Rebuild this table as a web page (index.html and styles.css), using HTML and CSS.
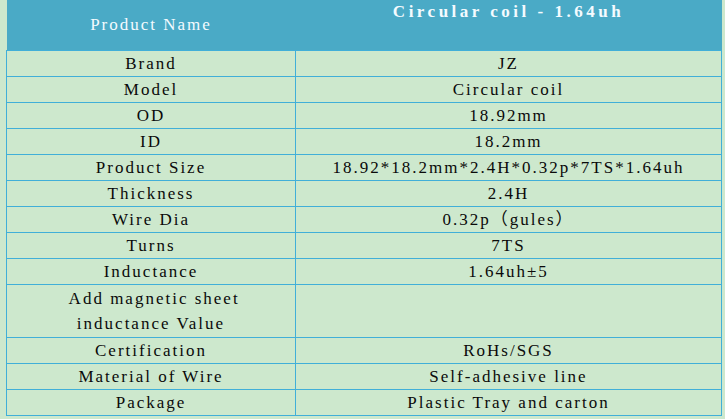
FILE: index.html
```html
<!DOCTYPE html>
<html>
<head>
<meta charset="utf-8">
<link rel="stylesheet" href="styles.css">
</head>
<body>
<table class="spec">
  <colgroup><col class="c1"><col class="c2"></colgroup>
  <thead>
    <tr class="head">
      <th class="h-name">Product Name</th>
      <th class="h-title">Circular coil - 1.64uh</th>
    </tr>
  </thead>
  <tbody>
    <tr><td>Brand</td><td>JZ</td></tr>
    <tr><td>Model</td><td>Circular coil</td></tr>
    <tr><td>OD</td><td>18.92mm</td></tr>
    <tr><td>ID</td><td>18.2mm</td></tr>
    <tr><td>Product Size</td><td>18.92*18.2mm*2.4H*0.32p*7TS*1.64uh</td></tr>
    <tr><td>Thickness</td><td>2.4H</td></tr>
    <tr><td>Wire Dia</td><td>0.32p（gules）</td></tr>
    <tr><td>Turns</td><td>7TS</td></tr>
    <tr><td>Inductance</td><td>1.64uh±5</td></tr>
    <tr class="tall"><td>&nbsp;Add magnetic sheet<br>inductance Value</td><td></td></tr>
    <tr><td>Certification</td><td>RoHs/SGS</td></tr>
    <tr><td>Material of Wire</td><td>Self-adhesive line</td></tr>
    <tr><td>Package</td><td>Plastic Tray and carton</td></tr>
  </tbody>
</table>
</body>
</html>
```
FILE: styles.css
```css
html, body {
  margin: 0;
  padding: 0;
  background: #cde8cd;
}
body {
  padding-left: 6px;
  font-family: "Liberation Serif", "Noto Sans CJK SC", serif;
  font-size: 17px;
  letter-spacing: 2px;
  color: #0a0a0a;
}
.spec {
  border-collapse: collapse;
  table-layout: fixed;
  width: 715px;
}
.c1 { width: 289px; }
.c2 { width: 426px; }
.spec td {
  border: 1px solid #41afd8;
  text-align: center;
  vertical-align: middle;
  height: 25px;
  padding: 0;
  line-height: 25px;
  white-space: nowrap;
}
.spec .tall td {
  height: 51px;
  line-height: 25px;
  padding: 0 0 1px;
}
.head th {
  background: #4aaac6;
  color: #f4fbff;
  height: 50px;
  padding: 0;
  border: 0;
  font-weight: normal;
}
.h-name {
  vertical-align: middle;
  padding-top: 0;
}
.h-title {
  vertical-align: top;
  font-weight: bold !important;
  letter-spacing: 3.5px;
  line-height: 24px;
}
```
